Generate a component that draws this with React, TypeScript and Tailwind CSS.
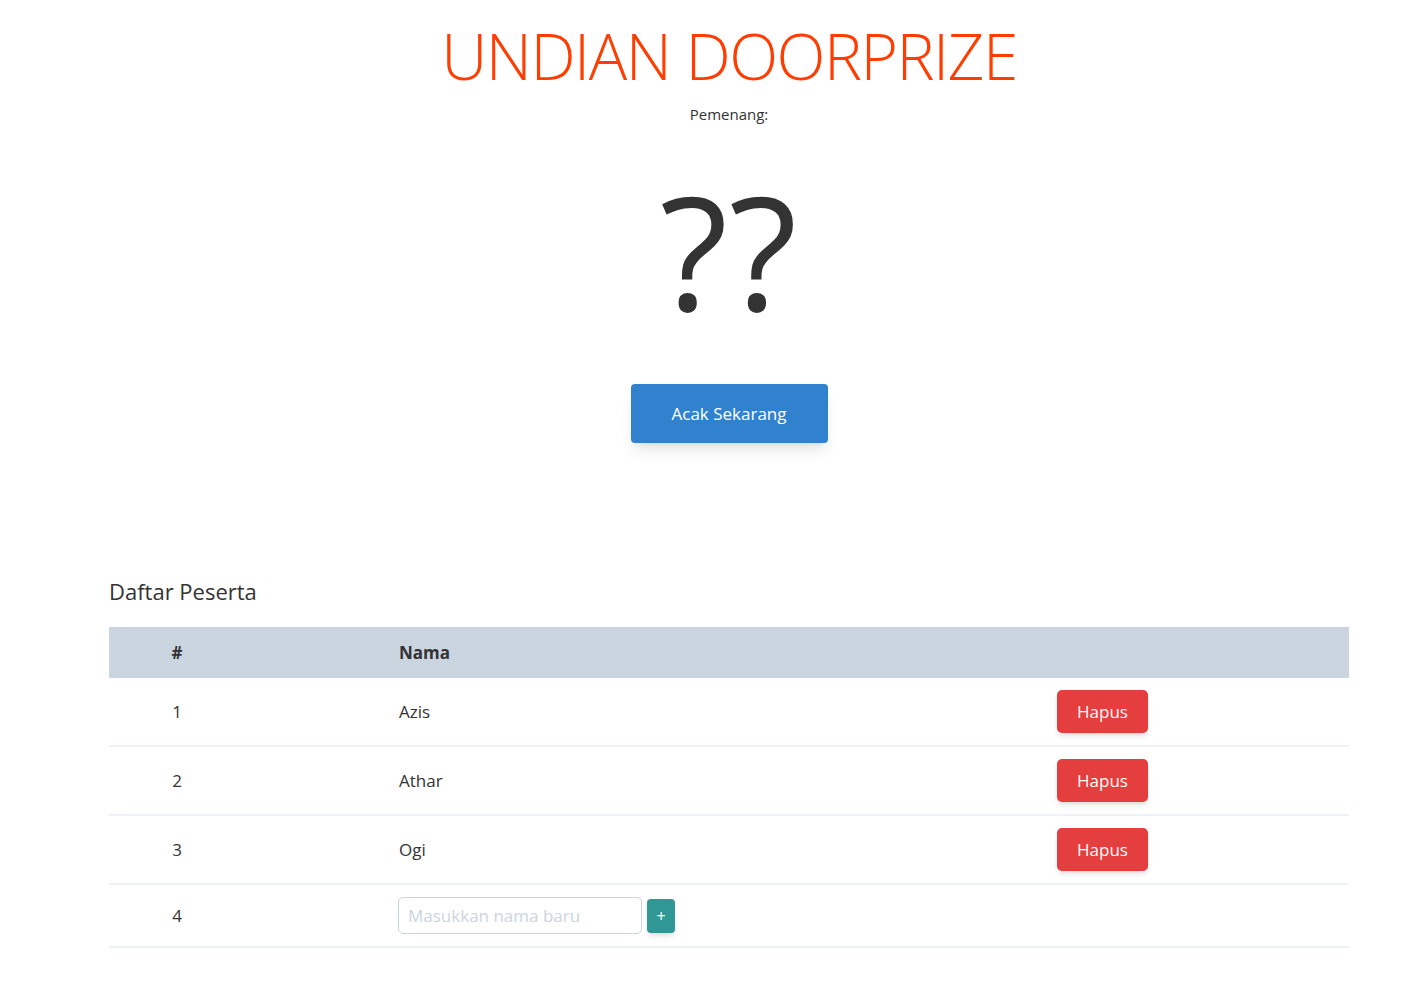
import React from "react";

const rows = ["Azis", "Athar", "Ogi"];

export default function App() {
  return (
    <div
      className="min-h-[997px] bg-white text-[#333333]"
      style={{ fontFamily: '"Open Sans", "Noto Sans", sans-serif' }}
    >
      <div className="ml-[109px] w-[1240px]">
        <div className="flex flex-col items-center pt-[16px]">
          <h1 className="text-[64px] leading-[80px] font-light text-[#ff3d00] tracking-[-1.5px]">
            UNDIAN DOORPRIZE
          </h1>
          <p className="mt-[8px] text-[15px] leading-[20px]">Pemenang:</p>
          <div className="mt-[46px] text-[158px] leading-[160px] tracking-[1px]">??</div>
          <button className="mt-[54px] w-[197px] h-[59px] rounded-[4px] bg-[#3182ce] text-white text-[17px] shadow-lg">
            Acak Sekarang
          </button>
        </div>

        <div className="mt-[132px]">
          <h2 className="text-[22px] leading-[32px]">Daftar Peserta</h2>
          <div className="mt-[20px]">
            <div className="flex items-center h-[51px] bg-[#cbd5e0] text-[17px] font-bold">
              <div className="w-[290px] flex">
                <span className="w-[136px] text-center">#</span>
              </div>
              <div>Nama</div>
            </div>
            {rows.map((n, i) => (
              <div key={n} className="flex items-center h-[69px] border-b-2 border-[#edf2f7] text-[17px]">
                <div className="w-[290px] flex">
                  <span className="w-[136px] text-center">{i + 1}</span>
                </div>
                <div className="w-[658px]">{n}</div>
                <button className="w-[91px] h-[43px] rounded-[5px] bg-[#e53e3e] text-white text-[17px] shadow-md">
                  Hapus
                </button>
              </div>
            ))}
            <div className="flex items-center h-[63px] border-b-2 border-[#edf2f7] text-[17px]">
              <div className="w-[289px] flex">
                <span className="w-[136px] text-center">4</span>
              </div>
              <input
                placeholder="Masukkan nama baru"
                className="w-[244px] h-[37px] rounded-[5px] border border-[#cbd5e0] px-[9px] text-[17px] placeholder:text-[#cbd5e0] outline-none"
              />
              <button className="ml-[5px] w-[28px] h-[34px] rounded-[4px] bg-[#319795] text-white text-[16px] shadow-md">
                +
              </button>
            </div>
          </div>
        </div>
      </div>
    </div>
  );
}
